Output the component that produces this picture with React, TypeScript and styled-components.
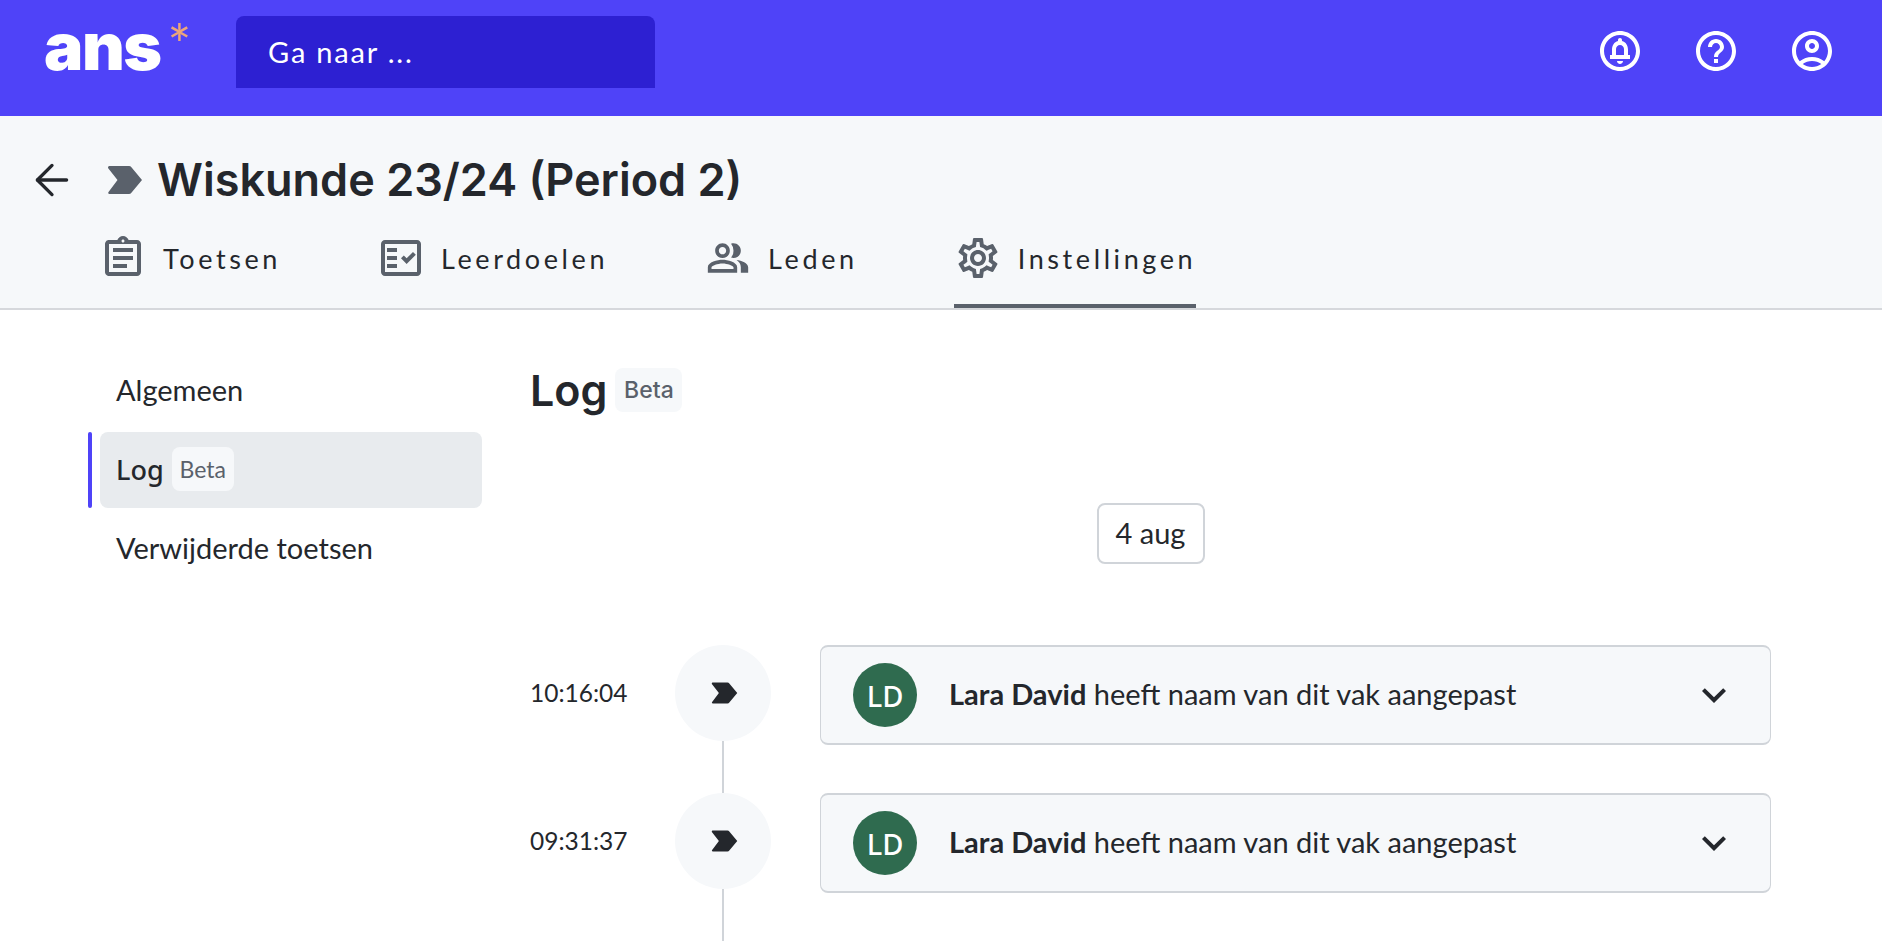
import React from 'react';
import styled, { createGlobalStyle } from 'styled-components';
import {
  MdOutlineCircleNotifications,
  MdHelpOutline,
  MdOutlineAccountCircle,
  MdOutlineAssignment,
  MdOutlineFactCheck,
  MdOutlinePeopleAlt,
  MdOutlineSettings,
  MdExpandMore,
} from 'react-icons/md';
import { ArrowLeft } from 'lucide-react';

const bodyFont = `Lato, "Open Sans", sans-serif`;
const headFont = `Inter, "Open Sans", sans-serif`;

const GlobalStyle = createGlobalStyle`
  html, body {
    margin: 0;
    padding: 0;
    background: #fff;
    color: #24272c;
    font-family: ${bodyFont};
    overflow: hidden;
  }
  * { box-sizing: border-box; }
`;

const TopBar = styled.header`
  height: 116px;
  background: #4f43f8;
  display: flex;
  align-items: flex-start;
  padding: 16px 46px 0 44px;
`;

const Logo = styled.div`
  width: 192px;
  display: flex;
  align-items: flex-start;
  color: #fff;
  font-family: ${headFont};
  font-weight: 900;
  font-size: 66px;
  line-height: 60px;
  letter-spacing: -1.5px;
  span {
    color: #eda67a;
    font-family: ${bodyFont};
    font-weight: 400;
    font-size: 56px;
    line-height: 56px;
    letter-spacing: 0;
    margin-left: 7px;
  }
`;

const SearchBox = styled.div`
  width: 419px;
  height: 72px;
  background: #2d20d2;
  border-radius: 8px 8px 0 0;
  color: #fff;
  font-size: 29px;
  letter-spacing: 1.8px;
  display: flex;
  align-items: center;
  padding: 0 0 2px 32px;
`;

const TopIcons = styled.nav`
  margin-left: auto;
  margin-top: 11px;
  display: flex;
  gap: 48px;
  color: #fff;
  font-size: 48px;
  svg { display: block; }
`;

const CourseBar = styled.section`
  background: #f6f8fa;
  border-bottom: 2px solid #d6d8dc;
  height: 194px;
  padding-top: 32px;
`;

const TitleRow = styled.div`
  height: 64px;
  display: flex;
  align-items: center;
  padding-left: 27px;
  color: #24272c;
`;

const CourseChevron = styled.svg`
  width: 36px;
  height: 28px;
  margin-left: 30px;
  margin-right: 14px;
  color: #5a616b;
`;

const Title = styled.h1`
  margin: 0;
  font-family: ${headFont};
  font-weight: 600;
  font-size: 45px;
  line-height: 64px;
  white-space: nowrap;
`;

const Tabs = styled.nav`
  margin-top: 24px;
  padding-left: 99px;
  display: flex;
  gap: 96px;
`;

const Tab = styled.div<{ $active?: boolean }>`
  height: 72px;
  padding-bottom: 24px;
  display: flex;
  align-items: center;
  gap: 16px;
  font-size: 27px;
  letter-spacing: 3.6px;
  color: #24272c;
  border-bottom: 4px solid ${p => (p.$active ? '#5a616b' : 'transparent')};
  svg { font-size: 48px; color: #5a616b; flex: none; }
`;

const MembersIcon = styled(MdOutlinePeopleAlt)`
  margin: 0 2px;
`;

const Body = styled.main`
  display: flex;
  padding: 42px 0 0 88px;
`;

const Sidebar = styled.aside`
  width: 394px;
  margin-right: 48px;
  display: flex;
  flex-direction: column;
  gap: 4px;
  flex: none;
`;

const SideItem = styled.div<{ $active?: boolean }>`
  height: 76px;
  margin-left: 12px;
  padding: 0 0 2px 16px;
  border-radius: 8px;
  display: flex;
  align-items: center;
  gap: 8px;
  font-size: 29px;
  position: relative;
  background: ${p => (p.$active ? '#e8ebee' : 'transparent')};
  &:last-child { padding-bottom: 6px; }
  ${p =>
    p.$active &&
    `&::before {
      content: '';
      position: absolute;
      left: -12px;
      top: 0;
      bottom: 0;
      width: 4px;
      border-radius: 2px;
      background: #4f43f8;
    }`}
`;

const ActiveLabel = styled.span`
  font-family: "Noto Sans", sans-serif;
  font-weight: 500;
  font-size: 27px;
`;

const Badge = styled.span<{ $head?: boolean }>`
  display: inline-flex;
  align-items: center;
  justify-content: center;
  height: 44px;
  width: ${p => (p.$head ? '67px' : '62px')};
  border-radius: 8px;
  background: #f6f8fa;
  color: #5a616b;
  font-size: 23px;
  font-family: ${p => (p.$head ? headFont : bodyFont)};
  font-weight: ${p => (p.$head ? 500 : 400)};
`;

const Content = styled.div`
  flex: 1;
  padding-right: 111px;
`;

const Heading = styled.div`
  height: 76px;
  display: flex;
  align-items: center;
  gap: 8px;
  h2 {
    margin: 0;
    font-family: ${headFont};
    font-weight: 600;
    font-size: 43px;
  }
`;

const DateRow = styled.div`
  margin-top: 75px;
  margin-bottom: 81px;
  display: flex;
  justify-content: center;
`;

const DatePill = styled.div`
  width: 108px;
  height: 61px;
  border: 2px solid #d0d4d9;
  border-radius: 8px;
  background: #fff;
  display: flex;
  align-items: center;
  justify-content: center;
  font-size: 29px;
  padding-bottom: 2px;
`;

const Row = styled.div`
  display: grid;
  grid-template-columns: 145px 96px 1fr;
  height: 148px;
`;

const Time = styled.div`
  height: 94px;
  display: flex;
  align-items: center;
  font-size: 24.5px;
`;

const Marker = styled.div`
  display: flex;
  flex-direction: column;
  align-items: center;
`;

const Circle = styled.div`
  width: 96px;
  height: 96px;
  flex: none;
  border-radius: 50%;
  background: #f6f8fa;
  display: flex;
  align-items: center;
  justify-content: center;
  padding-left: 2px;
  color: #24272c;
  svg { width: 27px; height: 22px; }
`;

const Line = styled.div`
  width: 2px;
  flex: 1;
  background: #d0d4d9;
`;

const Card = styled.div`
  margin-left: 49px;
  height: 100px;
  background: #f6f8fa;
  border: 2px solid #d0d4d9;
  border-left-width: 1px;
  border-right-width: 1px;
  border-radius: 8px;
  display: flex;
  align-items: center;
  padding: 0 32px;
  font-size: 29px;
  b { font-weight: 700; }
  svg { margin-left: auto; font-size: 48px; color: #24272c; flex: none; }
`;

const CardText = styled.span`
  padding-bottom: 4px;
`;

const Avatar = styled.div`
  width: 64px;
  height: 64px;
  border-radius: 50%;
  background: #2f6b4f;
  color: #fff;
  font-family: "Noto Sans", sans-serif;
  font-weight: 500;
  font-size: 29px;
  display: flex;
  align-items: center;
  justify-content: center;
  margin-right: 32px;
  flex: none;
`;

const chevronPath =
  'M1 1.5C1 .7 1.7 0 2.5 0H22c1 0 1.8.4 2.4 1.2L35 14 24.4 26.8c-.6.8-1.4 1.2-2.4 1.2H2.5C1.4 28 .8 27 1.5 26L10.5 14 1.4 2.4C1.1 2.1 1 1.8 1 1.5Z';

const log = [
  { time: '10:16:04' },
  { time: '09:31:37' },
];

const App = () => {
  return (
    <>
      <GlobalStyle />
      <TopBar>
        <Logo>ans<span>*</span></Logo>
        <SearchBox>Ga naar ...</SearchBox>
        <TopIcons>
          <MdOutlineCircleNotifications />
          <MdHelpOutline />
          <MdOutlineAccountCircle />
        </TopIcons>
      </TopBar>
      <CourseBar>
        <TitleRow>
          <ArrowLeft size={50} strokeWidth={1.6} />
          <CourseChevron viewBox="0 0 36 28" fill="currentColor">
            <path d={chevronPath} />
          </CourseChevron>
          <Title>Wiskunde 23/24 (Period 2)</Title>
        </TitleRow>
        <Tabs>
          <Tab><MdOutlineAssignment />Toetsen</Tab>
          <Tab><MdOutlineFactCheck />Leerdoelen</Tab>
          <Tab><MembersIcon size={44} />Leden</Tab>
          <Tab $active><MdOutlineSettings />Instellingen</Tab>
        </Tabs>
      </CourseBar>
      <Body>
        <Sidebar>
          <SideItem>Algemeen</SideItem>
          <SideItem $active><ActiveLabel>Log</ActiveLabel> <Badge>Beta</Badge></SideItem>
          <SideItem>Verwijderde toetsen</SideItem>
        </Sidebar>
        <Content>
          <Heading>
            <h2>Log</h2>
            <Badge $head>Beta</Badge>
          </Heading>
          <DateRow><DatePill>4 aug</DatePill></DateRow>
          {log.map(item => (
            <Row key={item.time}>
              <Time>{item.time}</Time>
              <Marker>
                <Circle>
                  <svg viewBox="0 0 36 28" fill="currentColor"><path d={chevronPath} /></svg>
                </Circle>
                <Line />
              </Marker>
              <Card>
                <Avatar>LD</Avatar>
                <CardText><b>Lara David</b> heeft naam van dit vak aangepast</CardText>
                <MdExpandMore />
              </Card>
            </Row>
          ))}
        </Content>
      </Body>
    </>
  );
};

export default App;
